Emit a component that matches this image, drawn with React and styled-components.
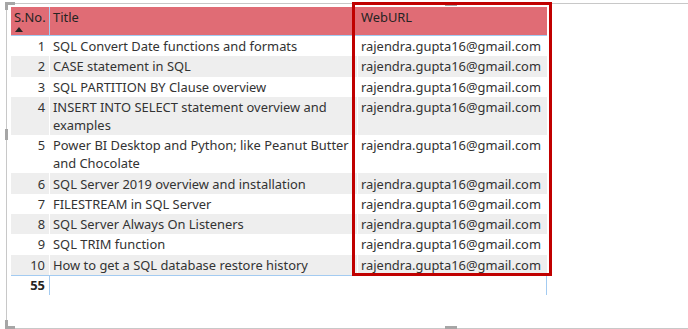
import React from "react";
import styled, { createGlobalStyle } from "styled-components";

const GlobalStyle = createGlobalStyle`
  html, body { margin: 0; padding: 0; background: #ffffff; overflow: hidden; }
  body { font-family: "Noto Sans", "Open Sans", sans-serif; }
`;

const COLS = "38px 307px 189px";
const BLUE = "#a3cbf1";

const Frame = styled.div`
  position: relative;
  box-sizing: border-box;
  margin: 3px 0 0 6px;
  width: 682px;
  height: 326px;
  border: 1px solid #c8c8c8;
  border-right: none;
`;

const Handle = styled.div`
  position: absolute;
  background: #a6a6a6;
  left: ${(p) => p.$x}px;
  top: ${(p) => p.$y}px;
  width: ${(p) => p.$w}px;
  height: ${(p) => p.$h}px;
`;

const Table = styled.div`
  position: relative;
  margin: 3px 0 0 4px;
  width: 536px;
  font-size: 12.9px;
  color: #333333;
`;

const Header = styled.div`
  display: grid;
  grid-template-columns: 39px 308px 189px;
  height: 28px;
  background: #e06c75;
  border-bottom: 1px solid ${BLUE};
  color: #252423;
`;

const HeadCell = styled.div`
  box-sizing: border-box;
  padding: 1px 3px 0;
  line-height: 18px;
  border-right: ${(p) => (p.$divider ? `1px solid ${BLUE}` : "none")};
`;

const SortArrow = styled.div`
  width: 0;
  height: 0;
  margin: 1px 0 0 1px;
  border-left: 4.5px solid transparent;
  border-right: 4.5px solid transparent;
  border-bottom: 5px solid #252423;
`;

const Cell = styled.div`
  padding: 1.15px 3px;
  line-height: 18px;
  text-align: ${(p) => (p.$num ? "right" : "left")};
  padding-right: ${(p) => (p.$num ? "4px" : "3px")};
`;

const Row = styled.div`
  display: grid;
  grid-template-columns: ${COLS};
  column-gap: 1px;
  & > ${Cell} {
    background: ${(p) => (p.$alt ? "#eeeeee" : "#ffffff")};
  }
`;

const TotalRow = styled.div`
  display: grid;
  grid-template-columns: 39px 308px 189px;
  height: 19px;
  border-top: 1px solid ${BLUE};
`;

const TotalCell = styled.div`
  box-sizing: border-box;
  padding: 0 4px 0 3px;
  line-height: 19px;
  font-weight: 700;
  color: #252423;
  text-align: ${(p) => (p.$num ? "right" : "left")};
  border-right: ${(p) => (p.$divider ? `1px solid ${BLUE}` : "none")};
`;

const Highlight = styled.div`
  position: absolute;
  box-sizing: border-box;
  left: 341px;
  top: -5px;
  width: 200px;
  height: 274px;
  border: 3px solid #c00000;
  pointer-events: none;
`;

const EMAIL = "rajendra.gupta16@gmail.com";
const rows = [
  "SQL Convert Date functions and formats",
  "CASE statement in SQL",
  "SQL PARTITION BY Clause overview",
  "INSERT INTO SELECT statement overview and examples",
  "Power BI Desktop and Python; like Peanut Butter and Chocolate",
  "SQL Server 2019 overview and installation",
  "FILESTREAM in SQL Server",
  "SQL Server Always On Listeners",
  "SQL TRIM function",
  "How to get a SQL database restore history",
];

export default function App() {
  return (
    <>
      <GlobalStyle />
      <Frame>
        <Handle $x={-2} $y={-2} $w={10} $h={3} />
        <Handle $x={-2} $y={-2} $w={3} $h={8} />
        <Handle $x={438} $y={-1} $w={12} $h={3} />
        <Handle $x={-2} $y={125} $w={3} $h={11} />
        <Handle $x={-2} $y={322} $w={10} $h={3} />
        <Handle $x={-2} $y={316} $w={3} $h={9} />
        <Handle $x={438} $y={322} $w={12} $h={3} />
        <Table>
          <Header>
            <HeadCell $divider>
              S.No.
              <SortArrow />
            </HeadCell>
            <HeadCell>Title</HeadCell>
            <HeadCell>WebURL</HeadCell>
          </Header>
          {rows.map((title, i) => (
            <Row key={i} $alt={i % 2 === 1}>
              <Cell $num>{i + 1}</Cell>
              <Cell>{title}</Cell>
              <Cell>{EMAIL}</Cell>
            </Row>
          ))}
          <TotalRow>
            <TotalCell $num $divider>55</TotalCell>
            <TotalCell />
            <TotalCell $divider />
          </TotalRow>
          <Highlight />
        </Table>
      </Frame>
    </>
  );
}
